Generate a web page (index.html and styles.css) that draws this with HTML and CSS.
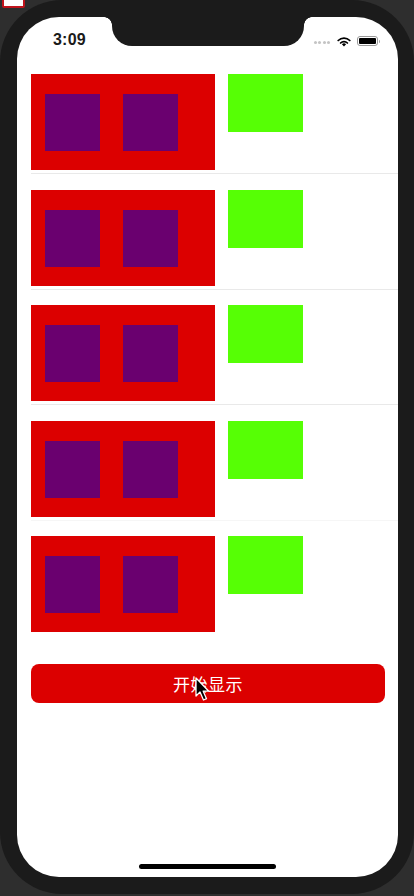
FILE: index.html
```html
<!DOCTYPE html>
<html lang="zh">
<head>
<meta charset="utf-8">
<title>Demo</title>
<link rel="stylesheet" href="styles.css">
</head>
<body>
<div class="app-icon"></div>
<div class="device">
  <div class="screen">
    <div class="notch"></div>
    <div class="statusbar">
      <span class="time">3:09</span>
      <div class="status-icons">
        <span class="dots"><i></i><i></i><i></i><i></i></span>
        <svg class="wifi" width="14" height="11" viewBox="0 0 14 11">
          <path d="M7 10.5 L4.9 8.3 A3 3 0 0 1 9.1 8.3 Z" fill="#000"/>
          <path d="M3.6 7 A4.8 4.8 0 0 1 10.4 7" stroke="#000" stroke-width="1.7" fill="none" stroke-linecap="round"/>
          <path d="M1.2 4.5 A8.2 8.2 0 0 1 12.8 4.5" stroke="#000" stroke-width="1.7" fill="none" stroke-linecap="round"/>
        </svg>
        <span class="battery"><span class="battery-fill"></span></span>
      </div>
    </div>
    <div class="list">
      <div class="row"><div class="red"><div class="purple"></div><div class="purple"></div></div><div class="green"></div></div>
      <div class="row"><div class="red"><div class="purple"></div><div class="purple"></div></div><div class="green"></div></div>
      <div class="row"><div class="red"><div class="purple"></div><div class="purple"></div></div><div class="green"></div></div>
      <div class="row faint"><div class="red"><div class="purple"></div><div class="purple"></div></div><div class="green"></div></div>
      <div class="row last"><div class="red"><div class="purple"></div><div class="purple"></div></div><div class="green"></div></div>
    </div>
    <button class="start-btn">开始显示</button>
    <svg class="cursor" width="16" height="26" viewBox="0 0 16 26">
      <path d="M1 1 L1 19 L5 15 L8.5 23 L11.5 21.7 L8.2 14.2 L13.8 14.2 Z" fill="#000" stroke="#fff" stroke-width="1.3" stroke-linejoin="round"/>
    </svg>
    <div class="home-indicator"></div>
  </div>
</div>
</body>
</html>
```
FILE: styles.css
```css
html, body {
  margin: 0;
  padding: 0;
}
body {
  width: 414px;
  height: 896px;
  background: #2e2e2e;
  overflow: hidden;
  position: relative;
  font-family: "Liberation Sans", "Noto Sans CJK SC", sans-serif;
}
.app-icon {
  position: absolute;
  left: 2px;
  top: -4px;
  width: 19px;
  height: 8px;
  background: #fff;
  border: 2px solid #c0141c;
  border-radius: 2px;
}
.device {
  width: 414px;
  height: 894px;
  box-sizing: border-box;
  background: #1b1b1b;
  border-radius: 62px;
  padding: 17px 16px 17px 17px;
}
.screen {
  position: relative;
  width: 381px;
  height: 860px;
  background: #fff;
  border-radius: 42px;
  overflow: hidden;
  display: flex;
  flex-direction: column;
}
.notch {
  position: absolute;
  left: 95px;
  top: 0;
  width: 192px;
  height: 29px;
  background: #1b1b1b;
  border-radius: 0 0 20px 20px;
}
.notch::before,
.notch::after {
  content: "";
  position: absolute;
  top: 0;
  width: 8px;
  height: 8px;
  background: radial-gradient(circle at 0 100%, transparent 7.5px, #1b1b1b 8px);
}
.notch::before {
  left: -8px;
}
.notch::after {
  right: -8px;
  background: radial-gradient(circle at 100% 100%, transparent 7.5px, #1b1b1b 8px);
}
.statusbar {
  height: 46px;
  display: flex;
  align-items: center;
  justify-content: space-between;
  padding: 0 20px 0 36px;
  box-sizing: border-box;
}
.time {
  font-size: 16px;
  font-weight: bold;
  color: #1a1a1a;
  letter-spacing: 0.2px;
  margin-top: 0;
}
.status-icons {
  display: flex;
  align-items: center;
  gap: 6px;
  margin-top: 2px;
}
.dots {
  display: flex;
  gap: 1.5px;
  margin-right: 1px;
  margin-top: 3px;
}
.dots i {
  width: 3px;
  height: 3px;
  border-radius: 50%;
  background: #c4c4c4;
}
.wifi {
  display: block;
}
.battery {
  position: relative;
  width: 21px;
  height: 10px;
  border: 1px solid #999;
  border-radius: 3px;
  box-sizing: border-box;
  padding: 1px;
  display: flex;
}
.battery::after {
  content: "";
  position: absolute;
  right: -3px;
  top: 2.5px;
  width: 1.5px;
  height: 3px;
  background: #aaa;
  border-radius: 0 1px 1px 0;
}
.battery-fill {
  flex: 1;
  background: #000;
  border-radius: 1px;
}
.list {
  margin-top: 11px;
  padding-left: 14px;
}
.row {
  display: flex;
  align-items: flex-start;
  gap: 13px;
  padding-bottom: 3px;
  border-bottom: 1px solid #e9e9e9;
  margin-bottom: 15.5px;
}
.row.faint {
  border-bottom-color: #f6f6f6;
}
.row.last {
  border-bottom: none;
  margin-bottom: 0;
}
.red {
  width: 184px;
  height: 96px;
  background: #dc0000;
  box-sizing: border-box;
  padding: 20px 0 0 14px;
  display: flex;
  align-items: flex-start;
  gap: 23px;
}
.purple {
  width: 55px;
  height: 57px;
  background: #6a006f;
}
.green {
  width: 75px;
  height: 58px;
  background: #56ff05;
}
.start-btn {
  margin: 29px 0 0 14px;
  width: 354px;
  height: 39px;
  border: none;
  border-radius: 8px;
  background: #dc0000;
  color: #fff;
  font-family: "Noto Sans CJK SC", sans-serif;
  font-size: 17px;
  padding: 0;
  letter-spacing: 0.5px;
}
.cursor {
  position: absolute;
  left: 178px;
  top: 660px;
}
.home-indicator {
  position: absolute;
  left: 122px;
  bottom: 8px;
  width: 137px;
  height: 5px;
  border-radius: 3px;
  background: #000;
}
```
